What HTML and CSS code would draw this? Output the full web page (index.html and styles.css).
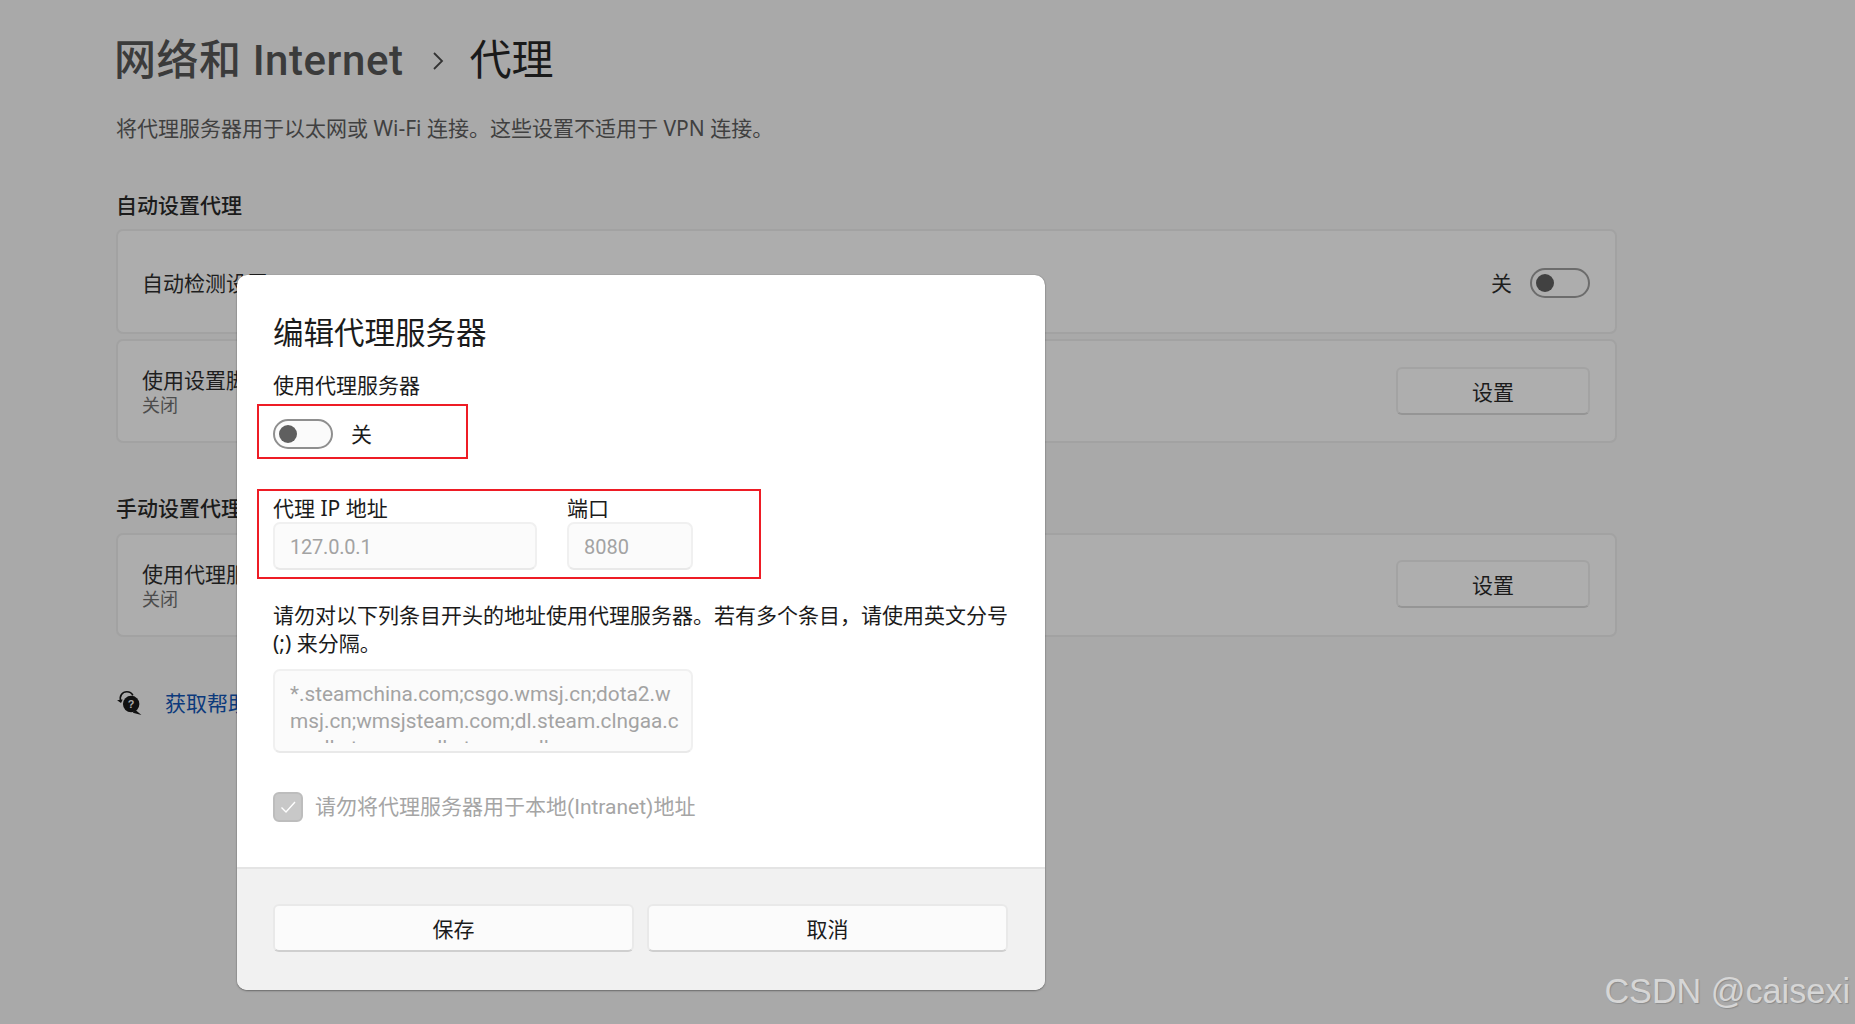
FILE: index.html
```html
<!DOCTYPE html>
<html lang="zh-CN">
<head>
<meta charset="utf-8">
<title>代理</title>
<link rel="stylesheet" href="styles.css">
</head>
<body>
<main class="page">
  <h1 class="crumb">
    <span class="crumb-parent">网络和 Internet</span>
    <svg class="crumb-sep" viewBox="0 0 12 20" width="12" height="20"><path d="M2 2l8 8-8 8" fill="none" stroke="#333" stroke-width="1.8"/></svg>
    <span class="crumb-current">代理</span>
  </h1>
  <p class="desc">将代理服务器用于以太网或 Wi-Fi 连接。这些设置不适用于 VPN 连接。</p>

  <h2 class="section">自动设置代理</h2>
  <div class="card card-a">
    <div class="card-text"><div class="card-title">自动检测设置</div></div>
    <div class="state">
      <span class="state-label">关</span>
      <span class="toggle toggle-bg"><span class="knob knob-bg"></span></span>
    </div>
  </div>
  <div class="card card-b">
    <div class="card-text"><div class="card-title">使用设置脚本</div><div class="card-sub">关闭</div></div>
    <div class="bg-btn">设置</div>
  </div>

  <h2 class="section section-2">手动设置代理</h2>
  <div class="card card-b card-c">
    <div class="card-text"><div class="card-title">使用代理服务器</div><div class="card-sub">关闭</div></div>
    <div class="bg-btn">设置</div>
  </div>

  <div class="help">
    <svg class="help-icon" viewBox="0 0 24 24" width="26" height="26">
      <path d="M4.5 10.5C2.6 5.5 6 1.6 10 1.6c2.6 0 4.6 1.4 5.6 3.4" fill="none" stroke="#111" stroke-width="1.5"/>
      <path d="M1 9.5l3.6 2.6 1.6-3.4z" fill="#111"/>
      <circle cx="14" cy="13" r="7.6" fill="#111"/>
      <path d="M18 18.5l5.5 4.5-8-2z" fill="#111"/>
      <text x="14" y="17" class="help-q">?</text>
    </svg>
    <span class="help-link">获取帮助</span>
  </div>
</main>

<section class="dialog">
  <div class="dialog-body">
    <h3 class="dialog-title">编辑代理服务器</h3>
    <div class="label">使用代理服务器</div>
    <div class="toggle-row">
      <span class="toggle"><span class="knob"></span></span>
      <span class="toggle-text">关</span>
    </div>
    <div class="fields">
      <div class="field">
        <div class="label">代理 IP 地址</div>
        <div class="input input-ip">127.0.0.1</div>
      </div>
      <div class="field">
        <div class="label">端口</div>
        <div class="input input-port">8080</div>
      </div>
    </div>
    <p class="note">请勿对以下列条目开头的地址使用代理服务器。若有多个条目，请使用英文分号 (;) 来分隔。</p>
    <div class="area">
      <div class="area-inner">
        <div class="area-line">*.steamchina.com;csgo.wmsj.cn;dota2.w</div>
        <div class="area-line">msj.cn;wmsjsteam.com;dl.steam.clngaa.c</div>
        <div class="area-line">om;ll.steam.cn;dl.steamcn.ll.com</div>
      </div>
    </div>
    <div class="check-row">
      <span class="check"><svg viewBox="0 0 20 20" width="20" height="20"><path d="M3.5 10.5l4.5 4.5 9-10" fill="none" stroke="#fff" stroke-width="1.4"/></svg></span>
      <span class="check-text">请勿将代理服务器用于本地(Intranet)地址</span>
    </div>
  </div>
  <div class="dialog-foot">
    <div class="foot-btn">保存</div>
    <div class="foot-btn">取消</div>
  </div>
  <div class="mark mark-toggle"></div>
  <div class="mark mark-fields"></div>
</section>

<div class="watermark">CSDN @caisexi</div>
</body>
</html>
```
FILE: styles.css
```css
* { box-sizing: border-box; }
html, body { margin: 0; padding: 0; }
body {
  position: relative;
  width: 1855px;
  height: 1024px;
  overflow: hidden;
  background: #a9a9a9;
  font-family: "Noto Sans", "Noto Sans CJK SC", sans-serif;
  color: #1b1b1b;
}
.page { width: 1617px; padding: 33px 0 0 116px; }
.crumb {
  display: flex;
  align-items: center;
  height: 56px;
  margin: 0;
  font-family: Roboto, "Noto Sans CJK SC", sans-serif;
  font-size: 42px;
  line-height: 56px;
  font-weight: 400;
}
.crumb-parent { color: #3b3b3b; font-weight: 500; margin-left: -2px; letter-spacing: .55px; }
.crumb-sep { margin: 0 26px 0 28px; }
.crumb-current { color: #1a1a1a; }
.desc { margin: 25px 0 0; height: 28px; font-size: 21px; line-height: 28px; color: #404040; }
.section { margin: 49px 0 10px; height: 28px; font-size: 21px; line-height: 28px; font-weight: 500; color: #1b1b1b; }
.section-2 { margin-top: 51px; margin-bottom: 11px; }
.card {
  display: flex;
  align-items: center;
  justify-content: space-between;
  padding: 0 25px 0 24px;
  background: #adadad;
  border: 2px solid #a2a2a2;
  border-radius: 7px;
  margin-bottom: 5px;
}
.card-a { height: 105px; padding-top: 2px; }
.card-b { height: 104px; }
.card-c .bg-btn { margin-bottom: 2px; }
.card-title { font-size: 21px; line-height: 28px; color: #1e1e1e; }
.card-sub { font-size: 18px; line-height: 22px; color: #4c4c4c; }
.state { display: flex; align-items: center; gap: 18px; }
.state-label { font-size: 21px; line-height: 28px; color: #1e1e1e; }
.bg-btn {
  width: 194px;
  height: 48px;
  display: flex;
  align-items: center;
  justify-content: center;
  background: #aeaeae;
  border: 2px solid #a3a3a3;
  border-bottom-color: #959595;
  border-radius: 6px;
  font-size: 21px;
  color: #1b1b1b;
}
.toggle {
  display: flex;
  align-items: center;
  width: 60px;
  height: 30px;
  padding-left: 4px;
  background: #fbfbfb;
  border: 2px solid #8f8f8f;
  border-radius: 15px;
}
.knob { display: block; width: 18px; height: 18px; border-radius: 50%; background: #5f5f5f; }
.toggle-bg { background: transparent; border-color: #6c6c6c; }
.knob-bg { background: #414141; }
.help { display: flex; align-items: center; gap: 23px; margin-top: 51px; height: 30px; }
.help-icon { display: block; }
.help-q { font-size: 10px; font-weight: 700; fill: #aaa; text-anchor: middle; font-family: "Liberation Sans", sans-serif; }
.help-link { font-size: 21px; line-height: 28px; color: #0c3a7c; }

.dialog {
  position: absolute;
  left: 237px;
  top: 275px;
  width: 808px;
  height: 715px;
  display: flex;
  flex-direction: column;
  background: #fff;
  border-radius: 10px;
  overflow: hidden;
  box-shadow: 0 1px 2px rgba(0, 0, 0, .35), 0 0 1px rgba(0, 0, 0, .4);
}
.dialog-body { flex: 1; padding: 35px 36px 0 36px; }
.dialog-title { margin: 0 0 17px; height: 44px; font-size: 30.5px; line-height: 44px; font-weight: 400; color: #1b1b1b; }
.label { height: 28px; font-size: 21px; line-height: 28px; color: #1b1b1b; }
.toggle-row { display: flex; align-items: center; gap: 18px; margin-top: 20px; height: 30px; }
.toggle-text { font-size: 21px; line-height: 28px; color: #1b1b1b; }
.fields { display: flex; gap: 30px; margin-top: 45px; }
.input {
  height: 48px;
  padding: 2px 16px 0 15px;
  display: flex;
  align-items: center;
  background: #fbfbfb;
  border: 2px solid #f0f0f0;
  border-bottom-color: #e9e9e9;
  border-radius: 7px;
  font-family: Roboto, "Noto Sans CJK SC", sans-serif;
  font-size: 20px;
  color: #a3a3a3;
}
.input-ip { width: 264px; letter-spacing: -.2px; }
.input-port { width: 126px; }
.note { margin: 31px 0 0; width: 736px; font-size: 21px; line-height: 28px; color: #1b1b1b; }
.area {
  margin-top: 12px;
  width: 420px;
  height: 84px;
  padding: 10px 0 0 15px;
  background: #fbfbfb;
  border: 2px solid #f0f0f0;
  border-bottom-color: #e9e9e9;
  border-radius: 7px;
}
.area-inner { height: 62px; overflow: hidden; }
.area-line { font-family: Roboto, "Noto Sans CJK SC", sans-serif; font-size: 20.8px; line-height: 27px; color: #a3a3a3; white-space: nowrap; }
.check-row { display: flex; align-items: center; gap: 12px; margin-top: 39px; height: 30px; }
.check {
  display: flex;
  align-items: center;
  justify-content: center;
  width: 30px;
  height: 30px;
  background: #c8c8c8;
  border: 2px solid #bdbdbd;
  border-radius: 6px;
}
.check-text { font-family: Roboto, "Noto Sans CJK SC", sans-serif; font-size: 21px; line-height: 28px; color: #a5a5a5; }
.dialog-foot {
  display: flex;
  gap: 13px;
  height: 123px;
  padding: 35px 37px 0 36px;
  background: #f1f1f1;
  border-top: 2px solid #e4e4e4;
}
.foot-btn {
  flex: 1;
  height: 48px;
  display: flex;
  align-items: center;
  justify-content: center;
  background: #fbfbfb;
  border: 2px solid #e9e9e9;
  border-bottom-color: #cfcfcf;
  border-radius: 6px;
  font-size: 21px;
  color: #1b1b1b;
}
.mark { position: absolute; border: 2px solid #ee1c25; pointer-events: none; }
.mark-toggle { left: 20px; top: 129px; width: 211px; height: 55px; }
.mark-fields { left: 20px; top: 214px; width: 504px; height: 90px; }
.watermark {
  position: absolute;
  right: 5px;
  top: 971px;
  font-family: "Liberation Sans", sans-serif;
  font-size: 34.2px;
  line-height: 40px;
  color: #d6d6d6;
  text-shadow: 1px 1px 1px #8c8c8c;
  white-space: nowrap;
}
```
